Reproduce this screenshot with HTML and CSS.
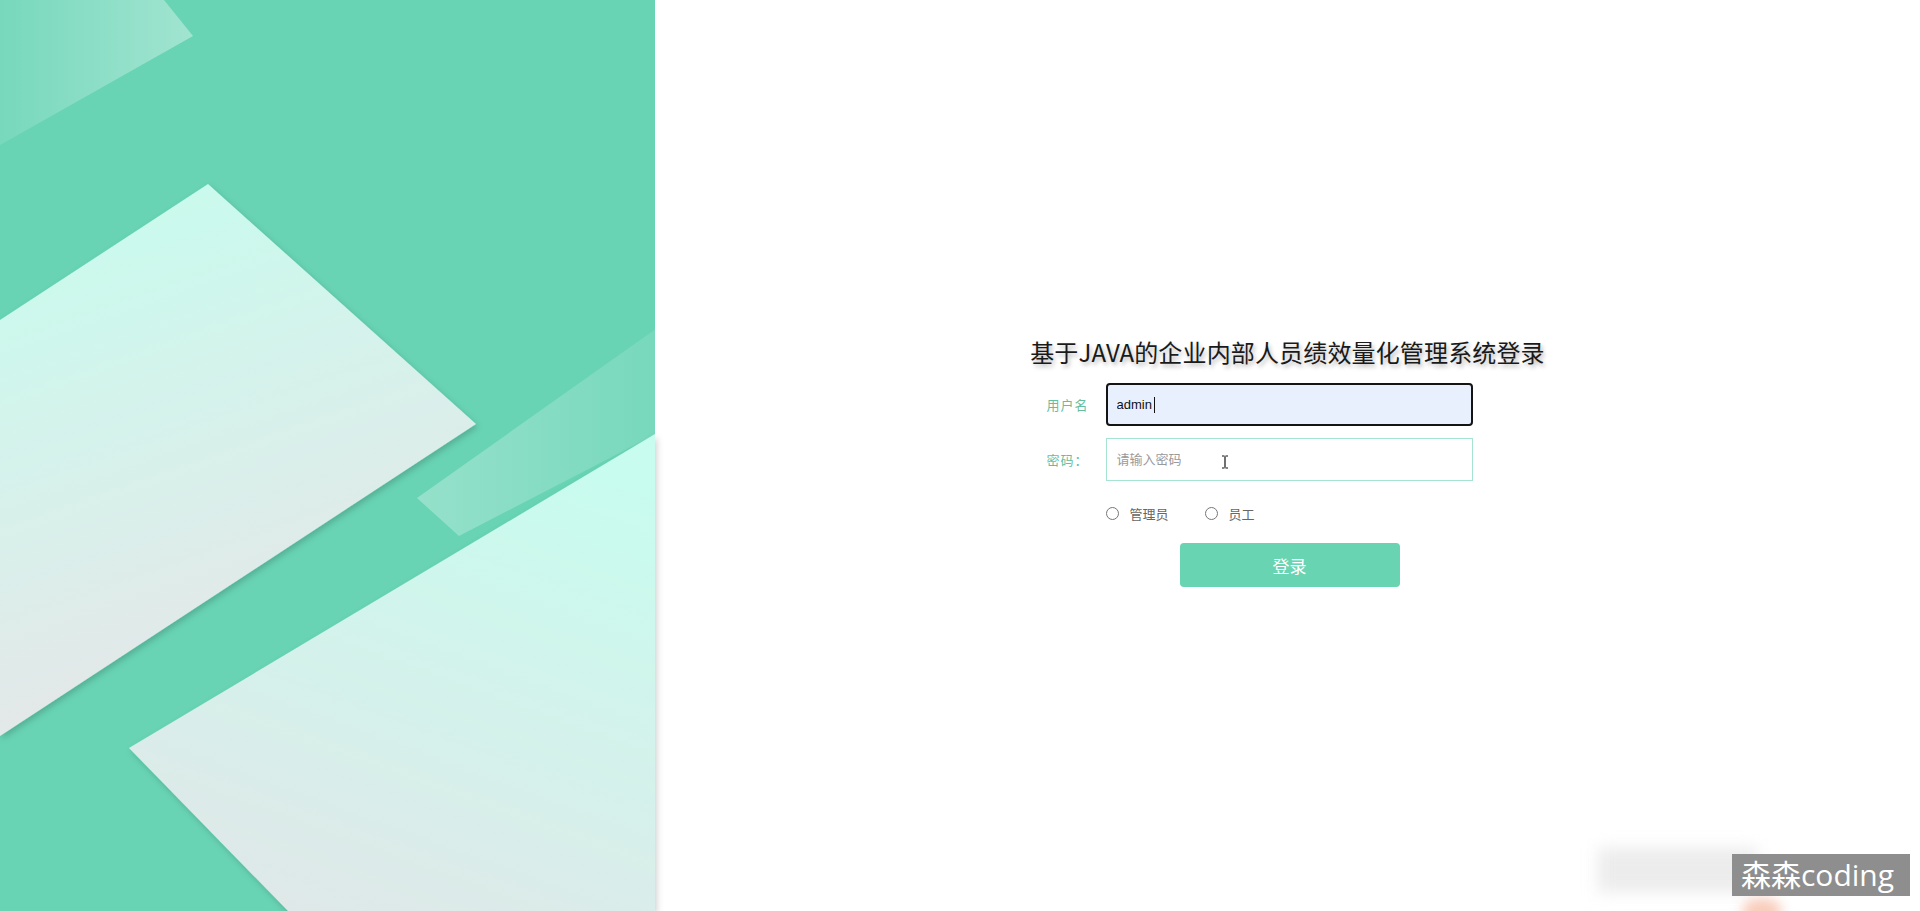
FILE: index.html
```html
<!DOCTYPE html>
<html lang="zh-CN">
<head>
<meta charset="utf-8">
<title>登录</title>
<link rel="stylesheet" href="styles.css">
</head>
<body>
<div class="page">
  <div class="side">
    <svg class="art" width="655" height="911" viewBox="0 0 655 911" preserveAspectRatio="none">
      <defs>
        <linearGradient id="g1" x1="0" y1="0" x2="0.3" y2="1">
          <stop offset="0" stop-color="#c6fdee"/>
          <stop offset="1" stop-color="#e6e6e8"/>
        </linearGradient>
        <linearGradient id="g2" x1="0.7" y1="0" x2="0.3" y2="1">
          <stop offset="0" stop-color="#c8fcee"/>
          <stop offset="1" stop-color="#dfe8e8"/>
        </linearGradient>
        <linearGradient id="b1" x1="0" y1="0" x2="1" y2="0">
          <stop offset="0" stop-color="#ffffff" stop-opacity="0.1"/>
          <stop offset="1" stop-color="#ffffff" stop-opacity="0.38"/>
        </linearGradient>
        <linearGradient id="b2" x1="0" y1="0" x2="1" y2="0">
          <stop offset="0" stop-color="#ffffff" stop-opacity="0.3"/>
          <stop offset="1" stop-color="#ffffff" stop-opacity="0.1"/>
        </linearGradient>
        <filter id="sh" x="-10%" y="-10%" width="120%" height="120%">
          <feDropShadow dx="2" dy="3" stdDeviation="3" flood-color="#000" flood-opacity="0.18"/>
        </filter>
      </defs>
      <rect width="655" height="911" fill="#68d4b4"/>
      <polygon points="0,0 164,0 193,36 0,145" fill="url(#b1)"/>
      <polygon points="208,184 476,424 0,736 0,320" fill="url(#g1)" filter="url(#sh)"/>
      <polygon points="417,498 660,326 660,432 459,536" fill="url(#b2)"/>
      <polygon points="129,748 655,434 655,911 288,911" fill="url(#g2)" filter="url(#sh)"/>
    </svg>
  </div>
  <div class="main">
    <div class="box">
      <h1 class="title">基于JAVA的企业内部人员绩效量化管理系统登录</h1>
      <div class="row">
        <label class="label">用户名</label>
        <div class="field">
          <input class="input input-active" type="text" value="admin">
          <span class="caret"></span>
        </div>
      </div>
      <div class="row row-gap">
        <label class="label">密码：</label>
        <div class="field">
          <input class="input" type="password" placeholder="请输入密码">
          <svg class="ibeam" width="8" height="14" viewBox="0 0 8 14"><path d="M1 1h2.5M4.5 1H7M4 1.5v11M1 13h2.5M4.5 13H7" stroke="#111" stroke-width="1.2" fill="none"/></svg>
        </div>
      </div>
      <div class="roles">
        <label class="role"><input type="radio" name="role"><span>管理员</span></label>
        <label class="role"><input type="radio" name="role"><span>员工</span></label>
      </div>
      <button class="btn" type="button">登录</button>
    </div>
  </div>
  <div class="blur-box"></div>
  <div class="blob"></div>
  <div class="watermark">森森coding</div>
</div>
</body>
</html>
```
FILE: styles.css
```css
html, body {
  margin: 0;
  padding: 0;
  background: #fff;
}
body {
  font-family: "Noto Sans CJK SC", "Noto Sans", sans-serif;
  color: #222;
  overflow: hidden;
}
.page {
  position: relative;
  display: flex;
  width: 1920px;
  height: 911px;
}
.side {
  width: 655px;
  height: 911px;
  flex: none;
  position: relative;
  z-index: 1;
}
.art {
  display: block;
  overflow: visible;
}
.main {
  flex: 1;
  display: flex;
  justify-content: center;
  padding-top: 336px;
}
.box {
  width: 516px;
  display: flex;
  flex-direction: column;
}
.title {
  margin: 0;
  font-size: 24px;
  line-height: 32px;
  font-weight: 400;
  color: #1a1a1a;
  text-align: center;
  white-space: nowrap;
  letter-spacing: 0.15px;
  text-shadow: 2px 3px 4px rgba(0, 0, 0, 0.28);
}
.row {
  display: flex;
  align-items: center;
  margin-top: 15px;
  padding-left: 17px;
}
.row-gap {
  margin-top: 12px;
}
.label {
  width: 59px;
  font-size: 13px;
  color: #62bf9f;
  letter-spacing: 1px;
}
.field {
  position: relative;
  width: 367px;
  height: 43px;
}
.input {
  box-sizing: border-box;
  width: 100%;
  height: 100%;
  border: 1px solid #a6e4d2;
  background: #fff;
  padding: 0 10px;
  font-family: "Liberation Sans", "Noto Sans CJK SC", sans-serif;
  font-size: 13px;
  color: #111;
  outline: none;
}
.input::placeholder {
  color: #9a9a9a;
  font-family: "Noto Sans CJK SC", sans-serif;
}
.input-active {
  border: 2px solid #141414;
  border-radius: 4px;
  background: #e8f0fe;
  padding-left: 9px;
}
.caret {
  position: absolute;
  left: 48px;
  top: 14px;
  width: 1px;
  height: 16px;
  background: #111;
}
.ibeam {
  position: absolute;
  left: 115px;
  top: 17px;
}
.roles {
  display: flex;
  align-items: center;
  height: 20px;
  margin-top: 22px;
  padding-left: 76px;
  gap: 36px;
}
.role {
  display: flex;
  align-items: center;
  font-size: 13px;
  color: #666;
}
.role input {
  width: 13px;
  height: 13px;
  margin: 0 11px 0 0;
  accent-color: #68d4b4;
}
.btn {
  align-self: center;
  margin-top: 20px;
  margin-left: 4px;
  width: 220px;
  height: 44px;
  border: none;
  border-radius: 4px;
  background: #68d4b2;
  color: #fff;
  font-family: "Noto Sans CJK SC", sans-serif;
  font-size: 17px;
  cursor: pointer;
}
.blur-box {
  position: absolute;
  left: 1598px;
  top: 848px;
  width: 160px;
  height: 44px;
  background: #ececec;
  filter: blur(8px);
}
.blob {
  position: absolute;
  left: 1742px;
  top: 898px;
  width: 40px;
  height: 26px;
  border-radius: 50%;
  background: #f6b8a0;
  filter: blur(6px);
  opacity: 0.7;
}
.watermark {
  position: absolute;
  left: 1732px;
  top: 854px;
  width: 178px;
  height: 42px;
  background: #8e8e8e;
  color: #fff;
  font-family: "Open Sans", "Noto Sans CJK SC", sans-serif;
  font-size: 30px;
  line-height: 42px;
  box-sizing: border-box;
  padding-left: 9px;
  white-space: nowrap;
  overflow: hidden;
}
```
